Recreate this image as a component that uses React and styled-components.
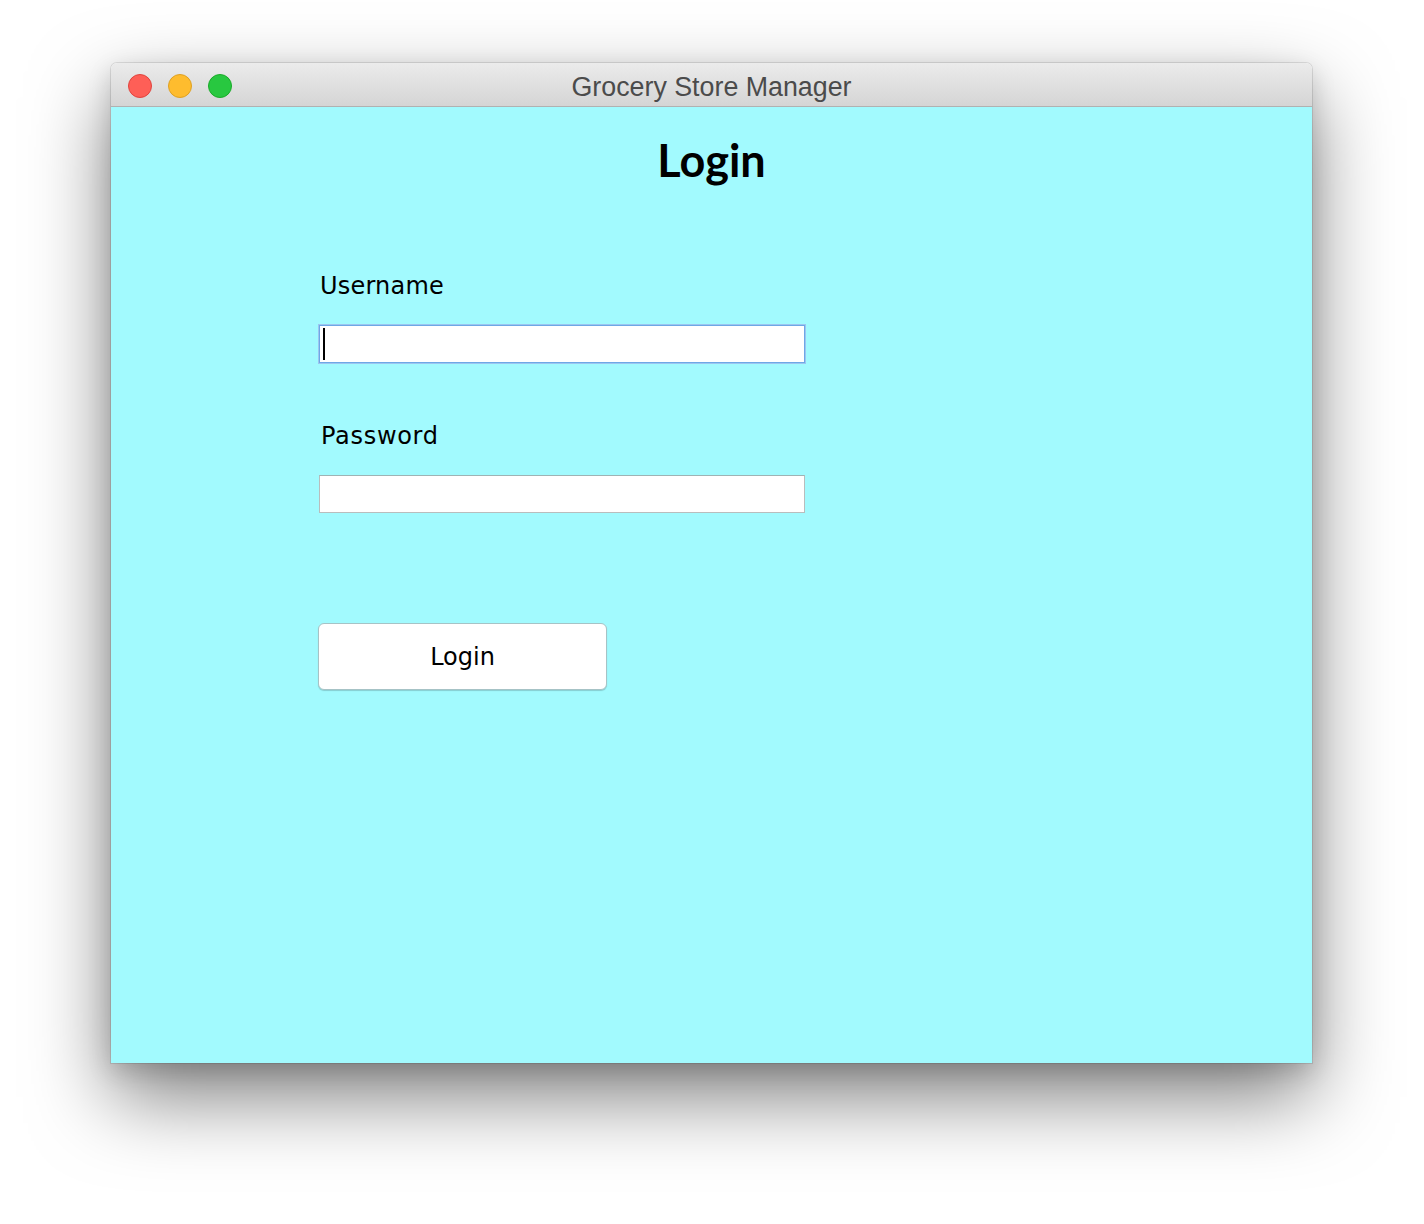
import React from 'react'
import styled, { createGlobalStyle } from 'styled-components'

const GlobalStyle = createGlobalStyle`
  html, body {
    margin: 0;
    padding: 0;
    background: #ffffff;
  }
`

export default function App() {
  return (
    <>
      <GlobalStyle />
      <Page>
        <Window>
          <TitleBar>
            <Lights>
              <Light color="#fe5f57" edge="#e0443e" />
              <Light color="#febc2e" edge="#dea123" />
              <Light color="#28c840" edge="#1aab29" />
            </Lights>
            <Title>Grocery Store Manager</Title>
          </TitleBar>
          <Content>
            <Heading>Login</Heading>
            <Form>
              <Label>Username</Label>
              <Field focused>
                <Caret />
              </Field>
              <Label shift={2} wide>Password</Label>
              <Field />
              <Button>Login</Button>
            </Form>
          </Content>
        </Window>
      </Page>
    </>
  )
}

const Page = styled.div`
  width: 1424px;
  height: 1224px;
  padding: 63px 0 0 111px;
  box-sizing: border-box;
  overflow: hidden;
`
const Window = styled.div`
  width: 1201px;
  height: 1000px;
  display: flex;
  flex-direction: column;
  border-radius: 6px 6px 0 0;
  overflow: hidden;
  box-shadow: 0 0 0 1px rgba(0, 0, 0, 0.1), 0 34px 80px rgba(0, 0, 0, 0.5), 0 8px 24px rgba(0, 0, 0, 0.15);
`
const TitleBar = styled.div`
  height: 43px;
  flex-shrink: 0;
  position: relative;
  display: flex;
  align-items: center;
  justify-content: center;
  background: linear-gradient(#ebebeb, #d5d5d5);
  border-bottom: 1px solid #b1b1b1;
`
const Lights = styled.div`
  position: absolute;
  left: 17px;
  top: 11px;
  display: flex;
  gap: 16px;
`
const Light = styled.span`
  width: 22px;
  height: 22px;
  border-radius: 50%;
  background: ${p => p.color};
  border: 1px solid ${p => p.edge};
`
const Title = styled.div`
  font-family: "Liberation Sans", Arial, sans-serif;
  font-size: 26.8px;
  color: #4b4b4b;
  margin-top: 5px;
`
const Content = styled.div`
  flex: 1;
  background: #a2fafe;
  display: flex;
  flex-direction: column;
`
const Heading = styled.h1`
  margin: 24px 0 0;
  text-align: center;
  font-family: Lato, "Open Sans", sans-serif;
  font-weight: 700;
  font-size: 45px;
  line-height: 58px;
  color: #000;
`
const Form = styled.div`
  display: flex;
  flex-direction: column;
  align-items: flex-start;
  padding: 82px 0 0 208px;
`
const Label = styled.div`
  font-family: "DejaVu Sans", Verdana, sans-serif;
  font-size: 24px;
  line-height: 30px;
  letter-spacing: ${p => (p.wide ? '0.7px' : '0.2px')};
  color: #000;
  margin-left: ${p => (p.shift || 1)}px;
  margin-bottom: 24px;
`
const Field = styled.div`
  width: 486px;
  height: 38px;
  box-sizing: border-box;
  background: #fff;
  border: 1px solid ${p => (p.focused ? '#6ea7e6' : '#b9bdbd')};
  border-top-color: ${p => (p.focused ? '#6ea7e6' : '#9fb3b4')};
  box-shadow: ${p => (p.focused ? '0 0 0 1px #9cc6f0' : 'none')};
  display: flex;
  align-items: center;
  padding-left: 3px;
  margin-bottom: 58px;
`
const Caret = styled.span`
  width: 2px;
  height: 32px;
  background: #000;
`
const Button = styled.button`
  width: 289px;
  height: 67px;
  margin-top: 52px;
  margin-left: -1px;
  background: #fff;
  border: 1px solid #a6c3c6;
  border-radius: 6px;
  box-shadow: 0 1px 1px rgba(0, 0, 0, 0.18);
  font-family: "DejaVu Sans", Verdana, sans-serif;
  font-size: 24px;
  color: #000;
  padding: 0;
`
